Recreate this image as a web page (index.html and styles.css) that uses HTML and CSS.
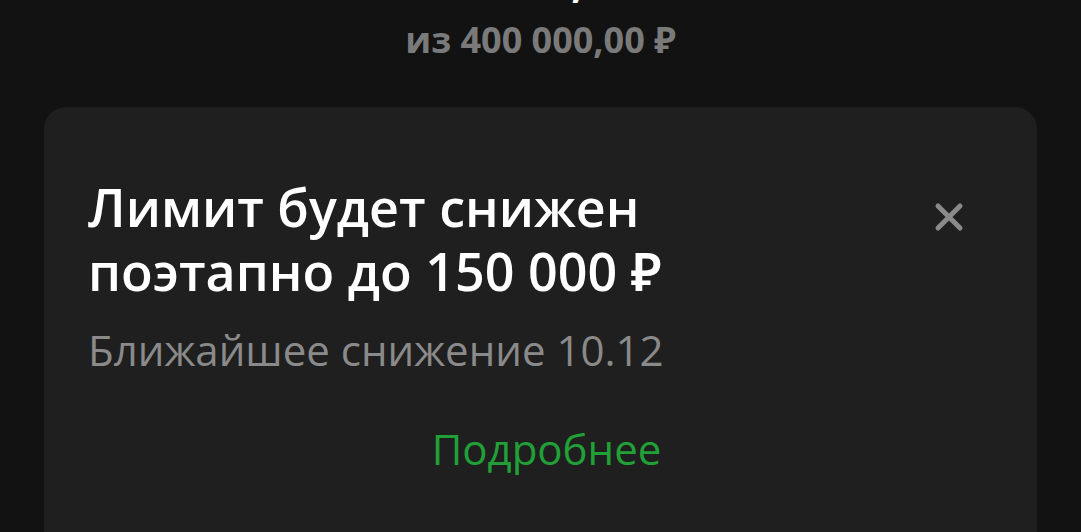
FILE: index.html
```html
<!DOCTYPE html>
<html lang="ru">
	<head>
		<meta charset="UTF-8" />
		<meta name="viewport" content="width=device-width, initial-scale=1.0" />
		<title>Лимит</title>
		<link rel="stylesheet" href="styles.css">
	</head>
	<body>
		<div class="summary">
			<div class="amount">300 000,00 ₽</div>
			<div class="total">из 400 000,00 ₽</div>
		</div>
		<div class="card">
			<div class="card-head">
				<h1 class="title">Лимит будет снижен поэтапно до 150&nbsp;000&nbsp;₽</h1>
				<button class="close" aria-label="Закрыть">
					<svg width="30" height="30" viewBox="0 0 30 30">
						<path d="M4 4 L26 26 M26 4 L4 26" stroke="#8a8a8a" stroke-width="5" stroke-linecap="round" fill="none" />
					</svg>
				</button>
			</div>
			<div class="subtitle">Ближайшее снижение 10.12</div>
			<a class="more" href="#">Подробнее</a>
		</div>
	</body>
</html>
```

FILE: styles.css
```css
* {
	box-sizing: border-box;
	font-family: "Open Sans", "Noto Sans", sans-serif;
}
body {
	margin: 0;
	height: 532px;
	overflow: hidden;
	background-color: #121212;
	padding: 0 44px 0 44px;
}
.summary {
	display: flex;
	flex-direction: column;
	align-items: center;
	margin-top: -48px;
}
.amount {
	color: #ffffff;
	font-size: 44px;
	font-weight: 700;
	line-height: 56px;
	margin-bottom: 8px;
}
.total {
	color: #7a7a7a;
	font-size: 36px;
	font-weight: 700;
	line-height: 48px;
}
.card {
	margin-top: 43px;
	background-color: #1f1f1f;
	border-radius: 22px;
	padding: 68px 32px 60px 44px;
	height: 600px;
}
.card-head {
	display: flex;
	justify-content: space-between;
	align-items: flex-start;
}
.title {
	margin: 0;
	color: #ffffff;
	font-size: 52px;
	font-weight: 600;
	line-height: 64px;
	max-width: 640px;
}
.close {
	background: none;
	border: none;
	padding: 0;
	margin: 27px 41px 0 0;
	cursor: pointer;
	display: flex;
}
.subtitle {
	margin-top: 19px;
	color: #8a8a8a;
	font-size: 42px;
	line-height: 56px;
}
.more {
	display: block;
	text-align: center;
	margin-top: 43px;
	color: #21a038;
	font-size: 42px;
	line-height: 56px;
	text-decoration: none;
}
```
